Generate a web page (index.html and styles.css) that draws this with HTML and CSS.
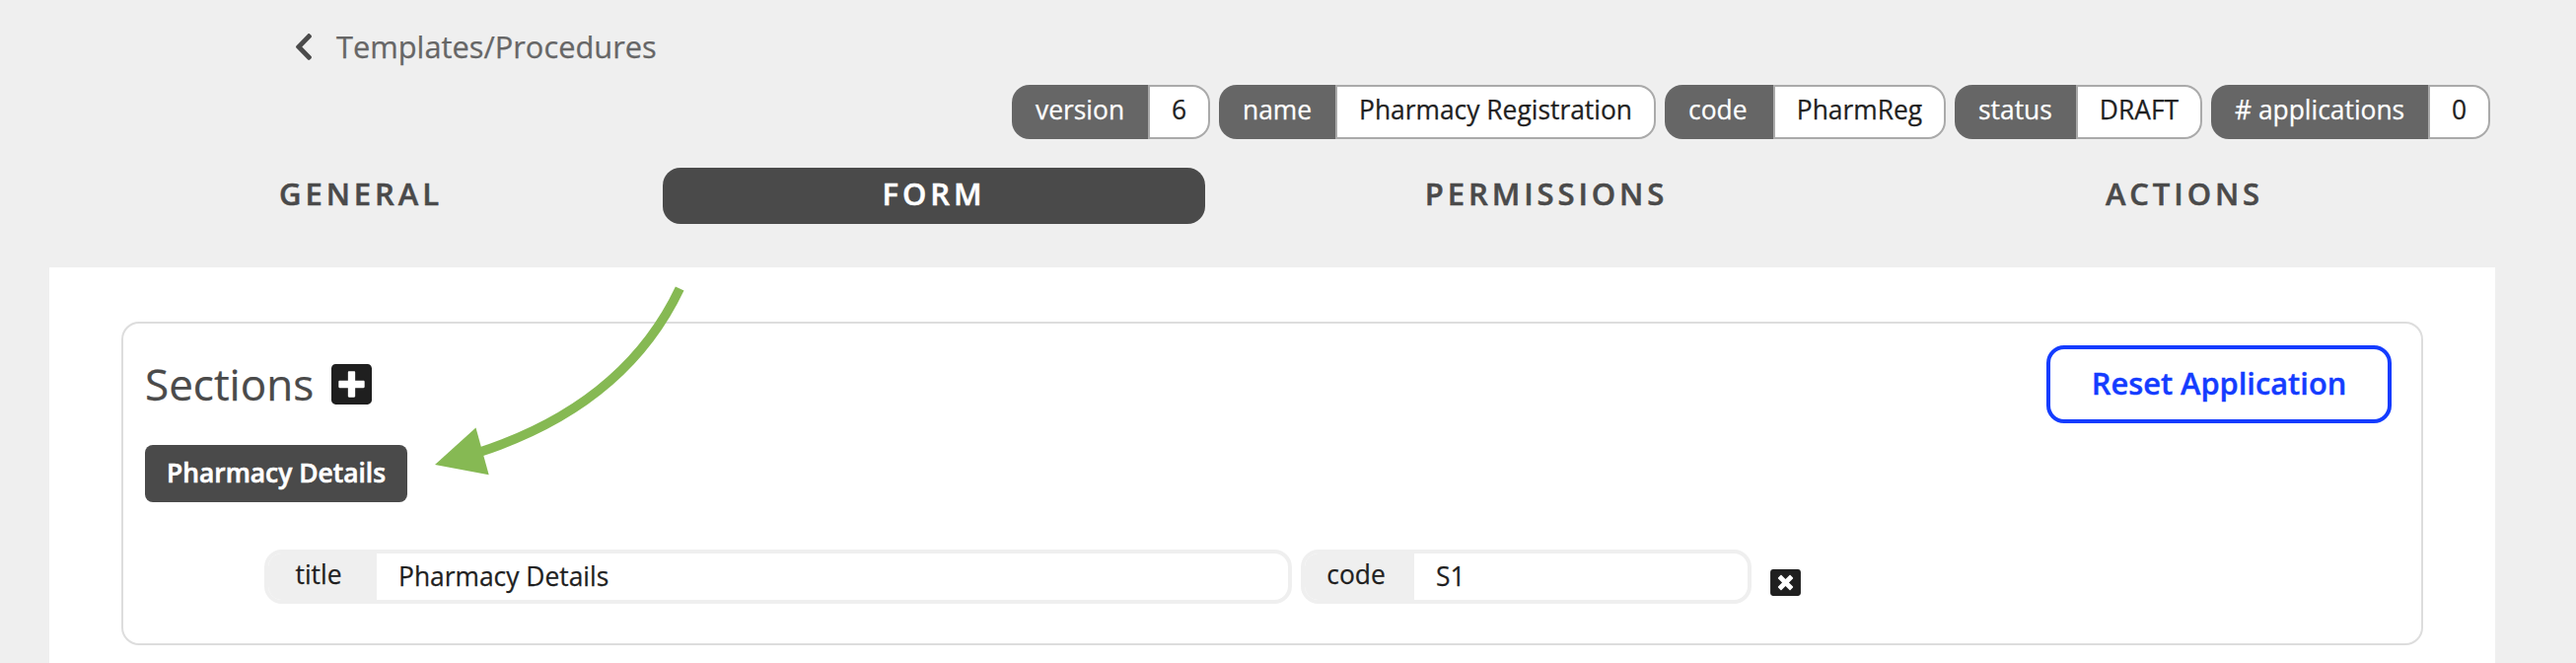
FILE: index.html
```html
<!DOCTYPE html>
<html lang="en">
<head>
<meta charset="utf-8">
<title>Templates/Procedures</title>
<link rel="stylesheet" href="styles.css">
</head>
<body>
<header class="header">
  <a class="back">
    <svg class="back-icon" viewBox="27 37 266 438" preserveAspectRatio="none"><path d="M34.52 239.03L228.87 44.69c9.37-9.37 24.57-9.37 33.94 0l22.67 22.67c9.36 9.36 9.37 24.52.04 33.9L131.49 256l154.02 154.75c9.34 9.38 9.32 24.54-.04 33.9l-22.67 22.67c-9.37 9.37-24.57 9.37-33.94 0L34.52 272.97c-9.37-9.37-9.37-24.57 0-33.94z"/></svg>
    <span class="back-text">Templates/Procedures</span>
  </a>
  <div class="pills">
    <div class="pill pill-version"><span class="pill-label">version</span><span class="pill-value">6</span></div>
    <div class="pill pill-name"><span class="pill-label">name</span><span class="pill-value">Pharmacy Registration</span></div>
    <div class="pill pill-code"><span class="pill-label">code</span><span class="pill-value">PharmReg</span></div>
    <div class="pill pill-status"><span class="pill-label">status</span><span class="pill-value">DRAFT</span></div>
    <div class="pill pill-apps"><span class="pill-label"># applications</span><span class="pill-value">0</span></div>
  </div>
  <nav class="tabs">
    <a class="tab">GENERAL</a>
    <a class="tab tab-active">FORM</a>
    <a class="tab">PERMISSIONS</a>
    <a class="tab">ACTIONS</a>
  </nav>
</header>
<main class="panel">
  <section class="card">
    <div class="card-head">
      <h2 class="title">Sections</h2>
      <svg class="add-icon" viewBox="0 32 448 448"><path d="M400 32H48C21.5 32 0 53.5 0 80v352c0 26.5 21.5 48 48 48h352c26.5 0 48-21.5 48-48V80c0-26.5-21.5-48-48-48zm-32 252c0 6.600-5.400 12-12 12h-92v92c0 6.600-5.400 12-12 12h-56c-6.600 0-12-5.400-12-12v-92H92c-6.600 0-12-5.400-12-12v-56c0-6.600 5.400-12 12-12h92v-92c0-6.600 5.400-12 12-12h56c6.600 0 12 5.400 12 12v92h92c6.600 0 12 5.400 12 12v56z"/></svg>
      <button class="reset">Reset Application</button>
    </div>
    <button class="section-button">Pharmacy Details</button>
    <div class="fields">
      <div class="field field-title"><span class="field-label">title</span><span class="field-value">Pharmacy Details</span></div>
      <div class="field field-code"><span class="field-label">code</span><span class="field-value">S1</span></div>
      <svg class="remove-icon" viewBox="0 32 512 448"><path d="M464 32H48C21.500 32 0 53.500 0 80v352c0 26.500 21.500 48 48 48h416c26.500 0 48-21.500 48-48V80c0-26.500-21.500-48-48-48zm-83.600 290.500c4.800 4.800 4.800 12.600 0 17.400l-40.500 40.500c-4.800 4.800-12.600 4.800-17.400 0L256 313.300l-66.500 67.100c-4.800 4.800-12.600 4.800-17.400 0l-40.500-40.500c-4.800-4.800-4.800-12.600 0-17.400l67.100-66.500-67.100-66.500c-4.800-4.800-4.800-12.600 0-17.400l40.500-40.500c4.800-4.800 12.600-4.800 17.400 0l66.500 67.100 66.500-67.100c4.800-4.800 12.600-4.800 17.400 0l40.500 40.500c4.800 4.800 4.800 12.600 0 17.400L313.300 256l67.100 66.500z"/></svg>
    </div>
  </section>
</main>
<svg class="arrow" viewBox="430 280 270 210"><path class="arrow-shaft" d="M689.200 292.500Q633 411 484 459"/><path class="arrow-head" d="M441 471L482.500 433.500L495.700 481.300Z"/></svg>
</body>
</html>
```
FILE: styles.css
```css
* { box-sizing: border-box; }
body {
  margin: 0;
  height: 672px;
  position: relative;
  overflow: hidden;
  display: flex;
  flex-direction: column;
  background: #efefef;
  color: #1f1f1f;
  font-family: "Open Sans", "Noto Sans", sans-serif;
  font-size: 26.4px;
  -webkit-text-stroke-width: 0.25px;
}
.header { height: 271px; padding-top: 24px; }
.back { display: flex; align-items: center; height: 46px; padding-left: 300px; gap: 25px; }
.back-icon { width: 16px; height: 27px; fill: #4a4a4a; }
.back-text { font-size: 30.8px; line-height: 46px; color: #666; }
.pills { display: flex; justify-content: flex-end; gap: 9px; margin-top: 16px; padding-right: 87px; }
.pill { display: flex; height: 55px; line-height: 50px; white-space: nowrap; }
.pill-label { padding-left: 24px; background: #666; color: #fff; border-radius: 18px 0 0 18px; }
.pill-value { flex: 1; border: 2px solid #aaa; background: #fff; border-radius: 0 18px 18px 0; text-align: center; line-height: 46px; }
.pill-version { width: 201px; }
.pill-version .pill-label { width: 138px; }
.pill-name { width: 443px; }
.pill-name .pill-label { width: 118px; }
.pill-code { width: 285px; }
.pill-code .pill-label { width: 110px; }
.pill-status { width: 251px; }
.pill-status .pill-label { width: 123px; }
.pill-apps { width: 283px; }
.pill-apps .pill-label { width: 220px; }
.tabs { display: grid; grid-template-columns: 612px 550px 692px 602px; margin: 29px 0 0 60px; }
.tab {
  height: 57px;
  line-height: 52px;
  border-radius: 18px;
  text-align: center;
  font-size: 31px;
  font-weight: 600;
  letter-spacing: 3.9px;
  color: #4a4a4a;
  -webkit-text-stroke-width: 0.5px;
}
.tab-active { background: #4a4a4a; color: #fff; }
.panel { flex: 1; margin: 0 82px 0 50px; padding: 55px 73px 0; background: #fff; }
.card { height: 328px; border: 2px solid #ddd; border-radius: 18px; padding: 22px 30px 0 22px; }
.card-head { display: flex; align-items: center; height: 79px; }
.title { margin: 0; width: 168px; font-size: 44px; font-weight: 400; color: #4a4a4a; line-height: 79px; }
.add-icon { width: 41px; height: 41px; margin-left: 21px; fill: #1f1f1f; }
.reset {
  width: 350px;
  height: 79px;
  margin-left: auto;
  padding: 0 0 2px;
  border: 4px solid #143cff;
  border-radius: 18px;
  background: #fff;
  color: #143cff;
  font: 600 30.8px/69px "Open Sans", "Noto Sans", sans-serif;
  -webkit-text-stroke-width: 0.4px;
}
.section-button {
  display: block;
  width: 266px;
  height: 58px;
  margin-top: 22px;
  padding: 0 0 2px;
  border: 0;
  border-radius: 8px;
  background: #4a4a4a;
  color: #fff;
  font: 600 26.4px/56px "Open Sans", "Noto Sans", sans-serif;
  -webkit-text-stroke-width: 0.6px;
}
.fields { display: flex; gap: 9px; margin: 48px 0 0 121px; }
.field { display: flex; height: 55px; border: 4px solid #efefef; border-radius: 18px; overflow: hidden; }
.field-label { background: #efefef; text-align: center; line-height: 42px; }
.field-value { padding-left: 22px; line-height: 46px; }
.field-title { width: 1042px; }
.field-title .field-label { width: 110px; padding-right: 8px; }
.field-code { width: 457px; }
.field-code .field-label { width: 111px; padding-right: 7px; }
.remove-icon { width: 31px; height: 27px; margin: 20px 0 0 10px; fill: #1f1f1f; }
.arrow { position: absolute; left: 430px; top: 280px; width: 270px; height: 210px; }
.arrow-shaft { fill: none; stroke: #86b953; stroke-width: 9.500; }
.arrow-head { fill: #86b953; }
```
